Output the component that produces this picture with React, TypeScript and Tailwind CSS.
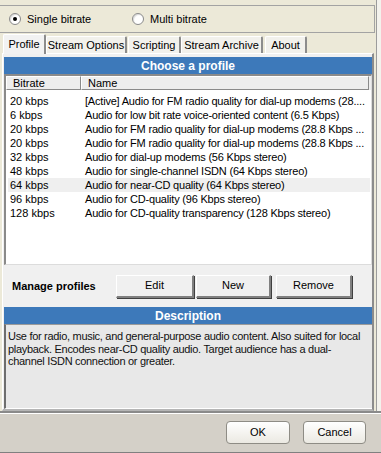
import React from "react";

// Profile list data: bitrate + (already truncated) name as shown in the list
const profiles = [
  { rate: "20 kbps", name: "[Active] Audio for FM radio quality for dial-up modems (28...." },
  { rate: "6 kbps", name: "Audio for low bit rate voice-oriented content (6.5 Kbps)" },
  { rate: "20 kbps", name: "Audio for FM radio quality for dial-up modems (28.8 Kbps ..." },
  { rate: "20 kbps", name: "Audio for FM radio quality for dial-up modems (28.8 Kbps ..." },
  { rate: "32 kbps", name: "Audio for dial-up modems (56 Kbps stereo)" },
  { rate: "48 kbps", name: "Audio for single-channel ISDN (64 Kbps stereo)" },
  { rate: "64 kbps", name: "Audio for near-CD quality (64 Kbps stereo)", selected: true },
  { rate: "96 kbps", name: "Audio for CD-quality (96 Kbps stereo)" },
  { rate: "128 kbps", name: "Audio for CD-quality transparency (128 Kbps stereo)" },
];

const tabs = [
  { label: "Profile", w: "w-[43px]", ml: "ml-[3px]", active: true },
  { label: "Stream Options", w: "w-[81px]", ml: "ml-0" },
  { label: "Scripting", w: "w-[53px]", ml: "ml-[1px]" },
  { label: "Stream Archive", w: "w-[82px]", ml: "ml-0" },
  { label: "About", w: "w-[42px]", ml: "ml-[2px]" },
];

const Radio = ({ checked, label }: { checked?: boolean; label: string }) => (
  <label className="flex items-center gap-[6px]">
    <span className="w-[12px] h-[12px] rounded-full border border-[#8a8a8a] bg-white flex items-center justify-center shadow-[inset_1px_1px_1px_rgba(0,0,0,0.15)]">
      {checked && <span className="w-[4px] h-[4px] rounded-full bg-black" />}
    </span>
    <span>{label}</span>
  </label>
);

// classic 3D raised button
const ClassicButton = ({ label, w }: { label: string; w: string }) => (
  <button
    className={`${w} h-[23px] bg-[#f0f0f0] border-t border-l border-white border-r-2 border-b-2 border-r-[#808080] border-b-[#808080] shadow-[1px_1px_0_#404040] text-black`}
  >
    {label}
  </button>
);

// XP rounded dialog button
const XpButton = ({ label, w }: { label: string; w: string }) => (
  <button
    className={`${w} h-[23px] rounded-[4px] border border-[#8e8c85] bg-gradient-to-b from-white to-[#ebe9e2] text-black`}
  >
    {label}
  </button>
);

export default function App() {
  return (
    <div className="w-[381px] h-[453px] flex flex-col bg-[#ECE9D8] font-['Liberation_Sans',sans-serif] text-[11px] text-black overflow-hidden">
      {/* =============== Upper area =============== */}
      <div className="flex h-[411px]">
        <div className="w-[377px] flex flex-col border-r border-[#9c9c9c]">
          {/* Bitrate mode group */}
          <div className="mt-[5px] mr-[1px] h-[28px] border-y border-r border-[#a3a3a3] flex items-center">
            <div className="ml-[9px] w-[123px]">
              <Radio checked label="Single bitrate" />
            </div>
            <Radio label="Multi bitrate" />
          </div>

          {/* Tabs */}
          <div className="h-[20px] flex items-end">
            {tabs.map((t) => (
              <div
                key={t.label}
                className={`${t.w} ${t.ml} flex items-center justify-center rounded-t-[2px] border-t border-l border-white border-r-2 border-r-[#8c8c8c] ${
                  t.active ? "h-[20px] bg-[#f2f2f2] relative z-10 -mb-px" : "h-[17px] bg-[#f2f1ec]"
                }`}
              >
                {t.label}
              </div>
            ))}
          </div>

          {/* Tab panel */}
          <div className="w-[372px] ml-[2px] flex-1 flex flex-col bg-[#f0f0f0] border-l border-t border-white border-r-2 border-b-2 border-r-[#8c8c8c] border-b-[#b5b5b5] pt-[3px] pl-px">
            <div className="h-[17px] bg-[#3d79ba] text-white font-bold text-[12px] flex items-center justify-center">
              Choose a profile
            </div>

            {/* Profile list */}
            <div className="h-[191px] bg-white border-l-2 border-t-2 border-l-[#8a8a8a] border-t-[#8a8a8a] border-r border-b border-r-[#dcdcdc] border-b-[#dcdcdc] flex flex-col">
              <div className="h-[14px] flex bg-[#ededed]">
                <div className="w-[75px] pl-[6px] border-t border-l border-white border-r border-b border-r-[#8a8a8a] border-b-[#8a8a8a] flex items-center">
                  Bitrate
                </div>
                <div className="flex-1 pl-[6px] mr-[2px] border-t border-l border-white border-r border-b border-r-[#8a8a8a] border-b-[#8a8a8a] flex items-center">
                  Name
                </div>
              </div>
              <div className="pt-[4px] flex flex-col">
                {profiles.map((p, i) => (
                  <div
                    key={i}
                    className={`h-[14px] flex items-center ml-[2px] mr-[1px] ${p.selected ? "bg-[#efefef]" : ""}`}
                  >
                    <span className="w-[77px] shrink-0 pl-[2px]">{p.rate}</span>
                    <span className="whitespace-nowrap tracking-[-0.2px]">{p.name}</span>
                  </div>
                ))}
              </div>
            </div>

            {/* Manage profiles */}
            <div className="h-[42px] flex items-center">
              <span className="ml-[8px] w-[104px] font-bold">Manage profiles</span>
              <div className="flex gap-[2px]">
                <ClassicButton label="Edit" w="w-[78px]" />
                <ClassicButton label="New" w="w-[75px]" />
              </div>
              <div className="ml-[5px]">
                <ClassicButton label="Remove" w="w-[76px]" />
              </div>
            </div>

            <div className="h-[17px] bg-[#3d79ba] text-white font-bold text-[12px] flex items-center justify-center">
              Description
            </div>
            <div className="flex-1 bg-[#e8e8e8] border-l-2 border-t border-l-[#6e6e6e] border-t-[#9a9a9a] border-b border-b-white pl-[2px] pt-[5px] pr-[2px] leading-[12.5px] tracking-[-0.3px] text-[#111] whitespace-nowrap">
              Use for radio, music, and general-purpose audio content. Also suited for local
              <br />
              playback. Encodes near-CD quality audio. Target audience has a dual-
              <br />
              channel ISDN connection or greater.
            </div>
          </div>
        </div>
        <div className="flex-1 bg-[#f3f2ec]" />
      </div>

      {/* =============== Bottom button bar =============== */}
      <div className="h-[2px] bg-[#8a8a8a]" />
      <div className="h-px bg-white" />
      <div className="flex-1 bg-[#d4d0c8] border-b border-[#808080] flex justify-end items-start pt-[7px] pr-[15px] gap-[13px]">
        <XpButton label="OK" w="w-[64px]" />
        <XpButton label="Cancel" w="w-[63px]" />
      </div>
    </div>
  );
}
